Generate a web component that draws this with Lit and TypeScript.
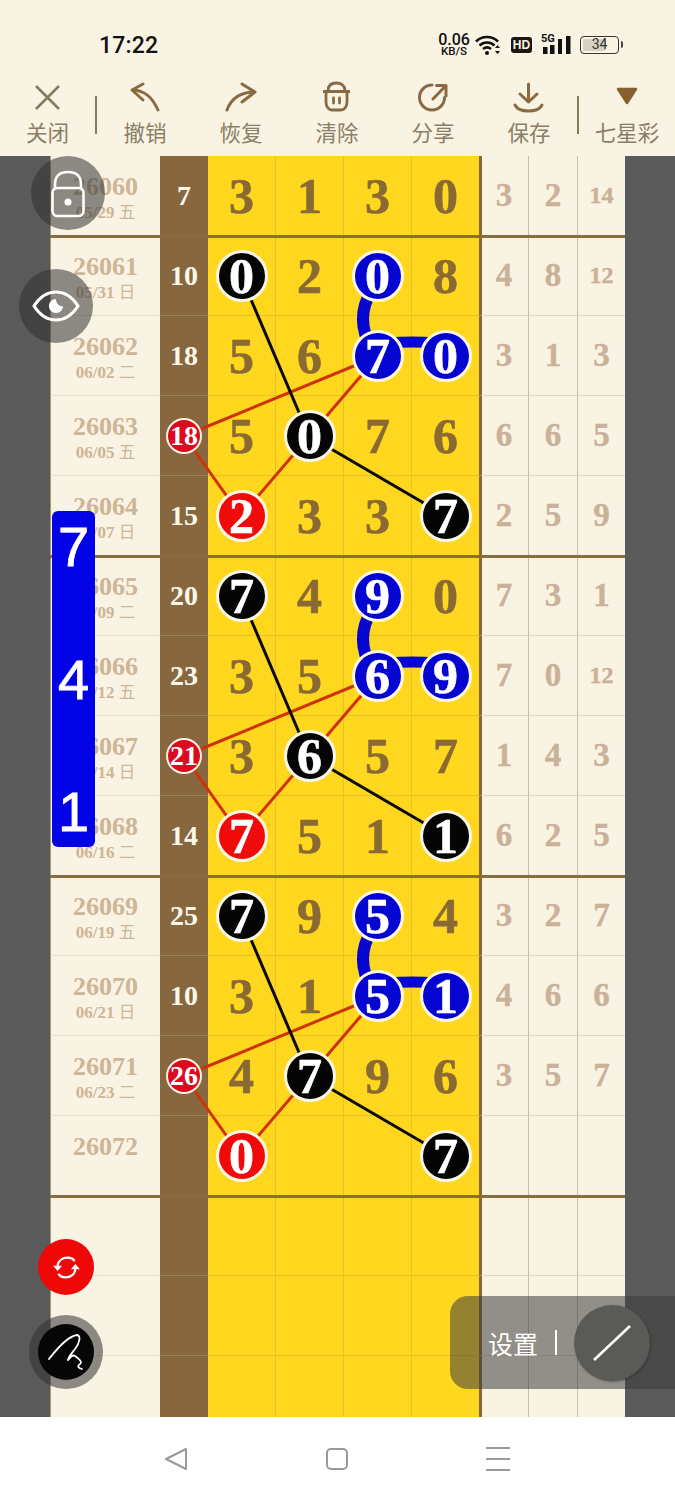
import { LitElement, html, css, svg } from "lit";
import { customElement } from "lit/decorators.js";

type Row = { id: string; date: string; wd: string; sum: string; main: string[]; side: string[] };

const raw: [string, string, string, string, string, string][] = [
  ["26060", "05/29", "五", "7", "3 1 3 0", "3 2 14"],
  ["26061", "05/31", "日", "10", "0k 2 0b 8", "4 8 12"],
  ["26062", "06/02", "二", "18", "5 6 7b 0b", "3 1 3"],
  ["26063", "06/05", "五", "18r", "5 0k 7 6", "6 6 5"],
  ["26064", "06/07", "日", "15", "2r 3 3 7k", "2 5 9"],
  ["26065", "06/09", "二", "20", "7k 4 9b 0", "7 3 1"],
  ["26066", "06/12", "五", "23", "3 5 6b 9b", "7 0 12"],
  ["26067", "06/14", "日", "21r", "3 6k 5 7", "1 4 3"],
  ["26068", "06/16", "二", "14", "7r 5 1 1k", "6 2 5"],
  ["26069", "06/19", "五", "25", "7k 9 5b 4", "3 2 7"],
  ["26070", "06/21", "日", "10", "3 1 5b 1b", "4 6 6"],
  ["26071", "06/23", "二", "26r", "4 7k 9 6", "3 5 7"],
  ["26072", "", "", "", "0r - - 7k", "- - -"],
  ["", "", "", "", "- - - -", "- - -"],
  ["", "", "", "", "- - - -", "- - -"],
  ["", "", "", "", "- - - -", "- - -"],
];
const rows: Row[] = raw.map(([id, date, wd, sum, m, s]) => ({
  id, date, wd, sum,
  main: m.split(" ").map((v) => (v === "-" ? "" : v)),
  side: s.split(" ").map((v) => (v === "-" ? "" : v)),
}));

const X = [241, 309, 378, 446];
const SUMX = 184;
const cy = (i: number) => 196 + i * 80;

@customElement("app-root")
export class AppRoot extends LitElement {
  static styles = css`
    :host { display: block; width: 675px; height: 1500px; overflow: hidden; position: relative; background: #f9f3e3; font-family: "Liberation Serif", "Noto Sans CJK SC", serif; }
    * { box-sizing: border-box; }
    .page { display: flex; flex-direction: column; height: 1500px; }

    .status { height: 75px; flex: none; display: flex; align-items: flex-start; padding: 33px 53px 0 99px; justify-content: space-between; font-family: Roboto, "Liberation Sans", sans-serif; color: #111; }
    .time { font-size: 23px; line-height: 26px; font-weight: 500; letter-spacing: 0.2px; }
    .sicons { display: flex; align-items: center; height: 24px; }
    .speed { display: flex; flex-direction: column; align-items: center; width: 36px; margin-right: 3px; font-weight: 500; }
    .speed b { font-size: 16px; line-height: 13px; font-weight: 500; }
    .speed i { font-size: 11.5px; line-height: 11px; font-style: normal; font-weight: 500; }
    .hd { width: 21px; height: 16px; background: #1c1712; color: #f9f3e3; border-radius: 3px; font-size: 12px; font-weight: 900; line-height: 16px; text-align: center; margin: 0 9px 0 10px; font-family: "Liberation Sans", sans-serif; }
    .sig { position: relative; width: 30px; height: 22px; margin-right: 9px; }
    .sig span { position: absolute; left: 0; top: -1px; font-size: 11px; line-height: 11px; font-weight: 700; }
    .batt { position: relative; width: 39px; height: 18px; border: 1.5px solid #3a362c; border-radius: 4px; margin-right: 3px; }
    .batt .fill { position: absolute; left: 2px; top: 2px; bottom: 2px; width: 23px; background: #d6d1c2; border-radius: 2px; }
    .batt span { position: absolute; inset: 0; text-align: center; font-size: 14px; line-height: 15px; color: #333; }
    .batt::after { content: ""; position: absolute; right: -5px; top: 4px; width: 2px; height: 7px; background: #444; border-radius: 0 2px 2px 0; }

    .tools { height: 81px; flex: none; display: grid; grid-template-columns: 95px 2px 96px 96px 96px 96px 96px 2px 96px; position: relative; }
    .tool { display: flex; flex-direction: column; align-items: center; font-family: "Noto Sans CJK SC", sans-serif; font-size: 21.5px; color: #8a7f66; line-height: 28px; }
    .tool svg { display: block; height: 43px; width: 40px; flex: none; }
    .tool span { white-space: nowrap; }
    .sep { width: 2px; height: 38px; margin-top: 21px; background: #8a7a5c; }

    .board { flex: none; height: 1261px; overflow: hidden; background: #5a5a5a; padding: 0 50px; position: relative; }
    .row { position: relative; height: 80px; display: grid; grid-template-columns: 110px 48px repeat(4, 68px) 48px 49px 48px; }
    .row.thick::after { content: ""; position: absolute; z-index: 1; left: 0; right: 0; bottom: -2px; height: 3px; background: #8a6c40; }
    .c { display: flex; align-items: center; justify-content: center; border-bottom: 1px solid #e8dfc9; font-weight: 700; }
    .date { background: #f9f3e3; flex-direction: column; padding-top: 6px; color: #cdb596; border-left: 1.5px solid #a89a78; }
    .date b { display: block; font-size: 26px; line-height: 24px; height: 25px; }
    .date small { display: block; font-size: 17px; line-height: 22px; height: 22px; }
    .date small span { font-weight: 400; font-family: "Noto Sans CJK SC", sans-serif; font-size: 16.5px; }
    .sum { background: #86673e; color: #fdf8ec; font-size: 28px; border-bottom-color: #9d8156; }
    .m { background: #fed71e; color: #8a6a33; font-size: 50px; border-right: 1px solid #eabf2c; border-bottom-color: #eabf2c; -webkit-text-stroke: 0.6px #8a6a33; }
    .m.last { border-right: 1px solid #86673e; }
    .s { background: #f9f3e3; color: #cab197; font-size: 33px; border-left: 1px solid #c9bfa9; border-bottom-color: #e0d7c2; -webkit-text-stroke: 0.4px #cab197; }
    .s.first { border-left: 2px solid #86673e; padding-right: 2px; }
    .s.small { font-size: 24px; }

    .ball { position: relative; z-index: 2; width: 52px; height: 52px; flex: none; border-radius: 50%; border: 3px solid #fbf6e4; color: #fff; display: flex; align-items: center; justify-content: center; font-size: 50px; -webkit-text-stroke: 0.6px #fff; }
    .k { background: #050505; }
    .b { background: #0505d2; }
    .r { background: #f00a0a; }
    .ball.small { width: 36px; height: 36px; border-width: 2px; font-size: 28px; background: #dc0a1e; -webkit-text-stroke: 0; }

    svg.lines { position: absolute; left: 0; top: 0; width: 675px; height: 1261px; z-index: 1; }

    .float { position: absolute; border-radius: 50%; display: flex; align-items: center; justify-content: center; z-index: 3; }
    .lock { left: 31px; top: 156px; width: 74px; height: 74px; background: rgba(50, 50, 50, 0.55); }
    .eye { left: 19px; top: 269px; width: 74px; height: 74px; background: rgba(50, 50, 50, 0.55); }
    .bar { position: absolute; z-index: 3; left: 52px; top: 511px; width: 43px; height: 336px; background: #0202e6; border-radius: 6px; color: #fff; display: flex; flex-direction: column; justify-content: space-between; align-items: center; padding: 5px 0 4px; font-family: "Liberation Sans", sans-serif; font-size: 56px; line-height: 62px; -webkit-text-stroke: 0.8px #fff; }
    .refresh { left: 38px; top: 1239px; width: 56px; height: 56px; background: #f00808; }
    .pen { left: 29px; top: 1315px; width: 74px; height: 74px; background: rgba(50, 50, 50, 0.55); }
    .pen div { width: 56px; height: 56px; border-radius: 50%; background: #060606; display: flex; align-items: center; justify-content: center; }
    .settings { position: absolute; z-index: 3; left: 450px; top: 1296px; width: 225px; height: 93px; border-radius: 18px 0 0 18px; background: rgba(60, 60, 60, 0.55); display: flex; align-items: center; padding-left: 38px; color: #fff; font-family: "Noto Sans CJK SC", sans-serif; font-size: 25px; }
    .settings i { width: 2px; height: 25px; background: #fff; margin-left: 17px; }
    .pencil { width: 76px; height: 76px; border-radius: 50%; background: #5a5a57; margin-left: 17px; display: flex; align-items: center; justify-content: center; box-shadow: 1px 1px 2px rgba(40,40,40,.5); }

    .nav { flex: 1; background: #fff; display: grid; grid-template-columns: repeat(3, 161px); justify-content: center; align-items: center; padding-right: 2px; }
    .nav div { display: flex; justify-content: center; }
  `;

  private cell(v: string, last: boolean) {
    const d = v.replace(/[kbr]/, "");
    const kind = v.slice(d.length);
    return html`<div class="c m ${last ? "last" : ""}">${kind ? html`<div class="ball ${kind}">${d}</div>` : d}</div>`;
  }

  private row(r: Row, i: number) {
    const isRed = r.sum.endsWith("r");
    const sum = r.sum.replace("r", "");
    return html`<div class="row ${i % 4 === 0 ? "thick" : ""}">
      <div class="c date">
        ${r.id ? html`<b>${r.id}</b><small>${r.date} <span>${r.wd}</span></small>` : ""}
      </div>
      <div class="c sum">${isRed ? html`<div class="ball small">${sum}</div>` : sum}</div>
      ${r.main.map((v, j) => this.cell(v, j === 3))}
      ${r.side.map((v, j) => html`<div class="c s ${v.length > 1 ? "small" : ""} ${j === 0 ? "first" : ""}">${v}</div>`)}
    </div>`;
  }

  private lines() {
    const groups = [0, 4, 8];
    return svg`${groups.map((g) => {
      const y = (k: number) => cy(g + k);
      const col = [X[0], X[1], X[2]];
      return svg`
        <path d="M${SUMX} ${y(3)}L${col[2]} ${y(2)}M${SUMX} ${y(3)}L${col[0]} ${y(4)}L${col[2]} ${y(2)}" fill="none" stroke="#cf3208" stroke-width="3"/>
        <path d="M${col[0]} ${y(1)}L${col[1]} ${y(3)}L${X[3]} ${y(4)}" fill="none" stroke="#0a0a0a" stroke-width="3"/>
        <path d="M372 ${y(1) + 14}Q354 ${y(1) + 42} 372 ${y(2) - 6}" fill="none" stroke="#0505d2" stroke-width="12"/>
        <path d="M388 ${y(2) - 13}Q412 ${y(2) - 15} 436 ${y(2) - 13}" fill="none" stroke="#0505d2" stroke-width="11"/>
      `;
    })}`;
  }

  render() {
    const ic = "#8a6a42";
    return html`<div class="page">
      <div class="status">
        <div class="time">17:22</div>
        <div class="sicons">
          <div class="speed"><b>0.06</b><i>KB/S</i></div>
          <svg width="26" height="22" viewBox="0 0 26 22">
            <path d="M1 7.5C7 1.5 17 1.5 23 7.5M4.5 11.5C8.5 7.5 15.5 7.5 19.5 11.5M8 15C10.5 13 13.5 13 16 15" fill="none" stroke="#111" stroke-width="2.6"/>
            <circle cx="12" cy="19" r="2" fill="#111"/>
            <path d="M20 14l2.5-3 2.5 3zM20 17l2.5 3 2.5-3z" fill="#111"/>
          </svg>
          <div class="hd">HD</div>
          <div class="sig"><span>5G</span>
            <svg width="30" height="22" viewBox="0 0 30 22">
              <rect x="2" y="13" width="4.500" height="7" fill="#111"/><rect x="9" y="11" width="4.500" height="9" fill="#111"/><rect x="17" y="5" width="4" height="15" fill="#111"/><rect x="25" y="2" width="4.500" height="18" fill="#111"/>
            </svg>
          </div>
          <div class="batt"><div class="fill"></div><span>34</span></div>
        </div>
      </div>

      <div class="tools">
        <div class="tool"><svg viewBox="0 0 40 43"><path d="M8 11L31 34M31 11L8 34" stroke="#857c60" stroke-width="2.6" fill="none"/></svg><span>关闭</span></div>
        <div class="sep"></div>
        <div class="tool"><svg viewBox="0 0 40 43"><path d="M18 9L7 15L18 25M7 15C21 15 28 24 33 35" stroke="${ic}" stroke-width="3" fill="none" stroke-linecap="round" stroke-linejoin="round"/></svg><span>撤销</span></div>
        <div class="tool"><svg viewBox="0 0 40 43"><path d="M21 9L34 17L21 27M34 17C19 17 10 24 6 35" stroke="${ic}" stroke-width="3" fill="none" stroke-linecap="round" stroke-linejoin="round"/></svg><span>恢复</span></div>
        <div class="tool"><svg viewBox="0 0 40 43"><path d="M11 16C11 10 15 8 19.500 8C24 8 28 10 28 16M6 16.500H33M9 17V27C9 32 12 35 15 35H24C27 35 30 32 30 27V17" stroke="${ic}" stroke-width="2.800" fill="none" stroke-linejoin="round"/><path d="M16.500 23V28M22.500 23V28" stroke="${ic}" stroke-width="2.800" stroke-linecap="round"/></svg><span>清除</span></div>
        <div class="tool"><svg viewBox="0 0 40 43"><path d="M19 10A12.500 12.500 0 1 0 31.500 22.500" stroke="${ic}" stroke-width="3" fill="none" stroke-linecap="round"/><path d="M20 24L33 10.500M23.500 10.500H33V21" stroke="${ic}" stroke-width="3" fill="none" stroke-linecap="round" stroke-linejoin="round"/></svg><span>分享</span></div>
        <div class="tool"><svg viewBox="0 0 40 43"><path d="M19.500 9V27M11 19L19.500 27L28 19M6 30C10 38 29 38 33 30" stroke="${ic}" stroke-width="3" fill="none" stroke-linecap="round" stroke-linejoin="round"/></svg><span>保存</span></div>
        <div class="sep"></div>
        <div class="tool"><svg viewBox="0 0 40 43"><path d="M11 14H29L20 28Z" fill="#86602f" stroke="#86602f" stroke-width="2.500" stroke-linejoin="round"/></svg><span>七星彩</span></div>
      </div>

      <div class="board">
        ${rows.map((r, i) => this.row(r, i))}
        <svg class="lines" viewBox="0 156 675 1261">${this.lines()}</svg>
      </div>

      <div class="nav">
        <div><svg width="26" height="26" viewBox="0 0 26 26"><path d="M23 3V23L3 13Z" fill="none" stroke="#9a9a9a" stroke-width="2" stroke-linejoin="round"/></svg></div>
        <div><svg width="26" height="26" viewBox="0 0 26 26"><rect x="3" y="3" width="20" height="20" rx="4" fill="none" stroke="#9a9a9a" stroke-width="2"/></svg></div>
        <div><svg width="26" height="26" viewBox="0 0 26 26"><path d="M1 2H25M1 13H25M1 24H25" stroke="#9a9a9a" stroke-width="2"/></svg></div>
      </div>
    </div>

    <div class="float lock"><svg width="40" height="50" viewBox="0 0 40 50"><path d="M7 20V16C7 8 12 4 20 4C28 4 33 8 33 16V20" fill="none" stroke="#fff" stroke-width="2.600"/><rect x="4.500" y="20" width="31" height="28" rx="5" fill="none" stroke="#fff" stroke-width="2.600"/><circle cx="20" cy="34" r="3.500" fill="#fff"/></svg></div>
    <div class="float eye"><svg width="48" height="34" viewBox="0 0 48 34"><path d="M2 17C9 6 16 3 24 3C32 3 39 6 46 17C39 28 32 31 24 31C16 31 9 28 2 17Z" fill="none" stroke="#fff" stroke-width="3"/><path d="M24 10C20 10 17 13 17 17C17 21 20 24 24 24C28 24 31 21 31 17C28 18 24 15 24 10Z" fill="#fff"/></svg></div>
    <div class="bar"><span>7</span><span>4</span><span>1</span></div>
    <div class="float refresh"><svg width="29" height="25" viewBox="0 0 32 28"><path d="M6 12C7 6 12 3 17 3C21 3 24 5 25 7M26 16C25 22 20 25 15 25C11 25 8 23 7 21" fill="none" stroke="#fff" stroke-width="2.600"/><path d="M1 12H11L6 18ZM21 16H31L26 10Z" fill="#fff"/></svg></div>
    <div class="float pen"><div><svg width="36" height="38" viewBox="0 0 36 38"><path d="M1 26C8 17 20 3 29 2C33 2 32 10 27 16C24 20 20 24 20 27C23 24 24 21 27 23C30 25 35 29 32 31C29 33 30 35 34 36" fill="none" stroke="#fff" stroke-width="1.800" stroke-linecap="round" stroke-linejoin="round"/></svg></div></div>
    <div class="settings">设置<i></i><div class="pencil"><svg width="40" height="38" viewBox="0 0 40 38"><path d="M2 36L38 2" stroke="#fff" stroke-width="2.600"/></svg></div></div>`;
  }
}
